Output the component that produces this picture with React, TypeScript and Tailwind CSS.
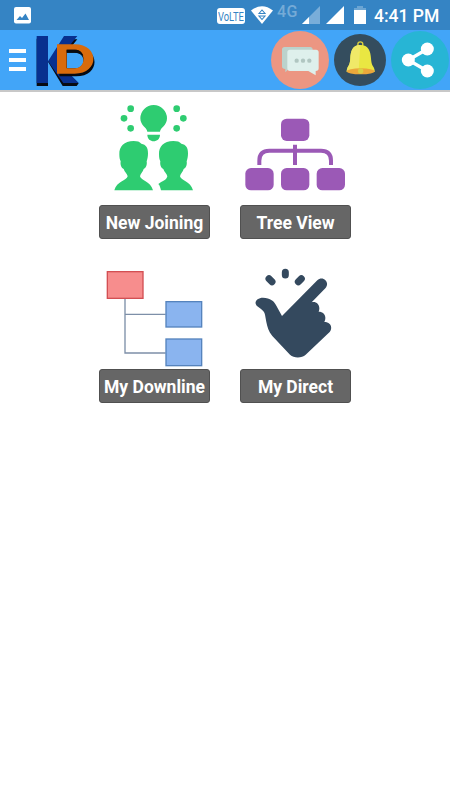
import type { ReactNode } from "react";

const StatusBar = () => {
  return (
    <div className="w-full h-[30px] bg-[#3584c4] flex items-start text-white">
      <svg className="w-[17px] h-[17px] ml-[14px] mt-[7px]" viewBox="0 0 17 17">
        <rect width="17" height="16.5" rx="2" fill="#fff" />
        <path d="M2.5 13 6 9l2 2 3.5-4.500 3.500 6.500z" fill="#3584c4" />
      </svg>
      <div className="ml-[186px] mt-2 w-7 h-4 rounded-[3px] bg-white text-[#3584c4] text-[13px] leading-[17px] flex justify-center">
        <span className="scale-x-[0.72]">VoLTE</span>
      </div>
      <svg className="w-[22px] h-[18px] ml-[6px] mt-[6px]" viewBox="0 0 22 18">
        <path d="M0 4.500Q11-4 22 4.500L11 18z" fill="#fff" />
        <path
          d="M8 7.500 11 4l3 3.500zM8 10h6l-3 3.500z"
          fill="#fff"
          stroke="#3584c4"
          strokeWidth="1.100"
        />
      </svg>
      <span className="ml-1 mt-[3px] w-[25px] text-[16px] leading-[17px] tracking-[0.5px] font-medium text-[#75abd7]">
        4G
      </span>
      <svg className="w-[18px] h-[18px] mt-[6px]" viewBox="0 0 18 18">
        <path d="M0 18 18 0v18z" fill="#79add9" />
        <path d="M0 18 7 11v7z" fill="#fff" />
      </svg>
      <svg className="w-[18px] h-[18px] ml-[6px] mt-[6px]" viewBox="0 0 18 18">
        <path d="M0 18 18 0v18z" fill="#fff" />
      </svg>
      <svg className="w-3 h-[18px] ml-[10px] mt-[6px]" viewBox="0 0 12 18">
        <path d="M3 0h6v2h3v3H0V2h3z" fill="#6ba5d3" />
        <path d="M0 4h12v14H0z" fill="#fff" />
      </svg>
      <span className="ml-2 mt-[5px] text-[17.5px] leading-[22px] font-medium whitespace-nowrap">
        4:41 PM
      </span>
    </div>
  );
};

const Logo = () => {
  return (
    <svg className="w-[59px] h-[52px] ml-[10px] mt-[2px]" viewBox="108 105 177 156">
      <path
        d="M110 116h34v142h-34zM144 185l68-67h20l-58 72 62 60-6 8h-42z"
        fill="#080b12"
      />
      <path d="M110 108h34v141h-34zM144 184l48-76h40l-40 50v46l44 45h-46z" fill="#08308f" />
      <path
        fillRule="evenodd"
        d="M178 141h50c72 0 76 88 0 88h-50zM201 158v47h24c34 0 34-47 0-47z"
        fill="#080b12"
      />
      <path
        fillRule="evenodd"
        d="M171 133h53c75 0 75 88 0 88h-53zM200 149v56h25c34 0 34-56 0-56z"
        fill="#d96b0c"
      />
      <path d="M200 149h25c14 0 22 8 25 18-6-6-14-9-25-9h-25z" fill="#080b12" />
    </svg>
  );
};

const Header = () => {
  return (
    <div className="w-full h-[62px] bg-[#42a5f8] border-b-2 border-[#c8c8c8] flex items-center">
      <div className="ml-[9px] w-[17px] flex flex-col gap-[5px]">
        <div className="h-1 bg-white" />
        <div className="h-1 bg-white" />
        <div className="h-1 bg-white" />
      </div>
      <Logo />
      <svg className="w-[58px] h-[58px] ml-[176px]" viewBox="33 21 174 174">
        <circle cx="120" cy="108" r="87" fill="#ec9682" />
        <path d="M74 69h76q8 0 8 8v50q0 8-8 8H86l-10 10v-10q-10 0-10-8V77q0-8 8-8z" fill="#bbd2cc" />
        <path d="M90 77h78q8 0 8 8v48q0 8-9 8v13l-22-13H90q-8 0-8-8V85q0-8 8-8z" fill="#def0ec" />
        <g fill="#b0c6c1">
          <circle cx="110" cy="110" r="6.500" />
          <circle cx="129" cy="110" r="6.500" />
          <circle cx="148" cy="110" r="6.500" />
        </g>
      </svg>
      <svg className="w-[52px] h-[52px] ml-[5px]" viewBox="222 30 156 156">
        <circle cx="300" cy="108" r="78" fill="#344d5e" />
        <circle cx="301" cy="61" r="7.500" fill="none" stroke="#d9cf3c" strokeWidth="4" />
        <path d="M301 63c-24 0-29 18-30 40-1 16-4 21-8 27-3 6-3 10-3 14h84c0-4 0-8-3-14-4-6-7-11-8-27-1-22-8-40-32-40z" fill="#e9e742" />
        <path d="M301 63c-24 0-29 18-30 40-1 16-4 21-8 27l-3 12h36z" fill="#f0e968" />
        <ellipse cx="302" cy="142" rx="42" ry="9" fill="#eba83b" />
        <circle cx="302" cy="141" r="8" fill="#d9d044" />
      </svg>
      <svg className="w-[58px] h-[58px] ml-[5px] shrink-0" viewBox="393 21 174 174">
        <circle cx="480" cy="108" r="87" fill="#27b5d5" />
        <path d="M502 75 445 108l57 33" fill="none" stroke="#fff" strokeWidth="10" />
        <g fill="#fff">
          <circle cx="502" cy="75" r="19.500" />
          <circle cx="445" cy="108" r="19.500" />
          <circle cx="502" cy="141" r="19.500" />
        </g>
      </svg>
    </div>
  );
};

const JoiningIcon = () => {
  return (
    <svg className="w-[111px] h-[109px]" viewBox="12 0 333 327" fill="#2ecc71">
      <circle cx="107" cy="38" r="10" />
      <circle cx="87" cy="67" r="10" />
      <circle cx="107" cy="97" r="10" />
      <circle cx="245" cy="38" r="10" />
      <circle cx="265" cy="67" r="10" />
      <circle cx="245" cy="97" r="10" />
      <path d="M157 107c-1-12-21-18-21-40a40 40 0 0 1 80 0c0 22-20 28-21 40zM157 116h38c0 26-38 26-38 0z" />
      <path d="M116 135c-29 0-44 17-43 40 0 9 1 15 4 21-2 12 3 21 9 23 2 8 11 14 12 22-3 14-33 14-40 42h116c-7-28-36-28-39-42 1-8 9-14 11-22 6-2 11-11 9-23 3-8 4-16 4-24 0-18-6-26-20-29-5-6-12-8-23-8z" />
      <path d="M235 135c-29 0-44 17-43 40 0 9 1 15 4 21-2 12 3 21 9 23 2 8 11 14 12 22-2 12-16 14-27 23 5 5 6 12 8 19h96c-7-28-36-28-39-42 1-8 9-14 11-22 6-2 11-11 9-23 3-8 4-16 4-24 0-18-6-26-20-29-5-6-12-8-24-8z" />
    </svg>
  );
};

const TreeIcon = () => {
  return (
    <svg className="w-[111px] h-[109px]" viewBox="15 0 333 327" fill="#9b59b6">
      <rect x="138" y="68" width="85" height="67" rx="17" />
      <rect x="31" y="216" width="85" height="67" rx="17" />
      <rect x="138" y="216" width="85" height="67" rx="17" />
      <rect x="245" y="216" width="85" height="67" rx="17" />
      <path
        d="M73 207v-13q0-30 30-30h155q30 0 30 30v13M180 146v61"
        fill="none"
        stroke="#9b59b6"
        strokeWidth="12"
      />
    </svg>
  );
};

const DownlineIcon = () => {
  return (
    <svg className="w-[111px] h-[109px]" viewBox="12 0 333 327">
      <path d="M90 116v163h122M90 163h122" fill="none" stroke="#7d8fa8" strokeWidth="4" />
      <rect x="37" y="35" width="107" height="80" fill="#f78d8d" stroke="#d34f53" strokeWidth="4" />
      <g fill="#8ab4ef" stroke="#5583bd" strokeWidth="4">
        <rect x="213" y="125" width="107" height="76" />
        <rect x="213" y="237" width="107" height="80" />
      </g>
    </svg>
  );
};

const DirectIcon = () => {
  return (
    <svg className="w-[111px] h-[109px]" viewBox="15 0 333 327" fill="#34495e">
      <path
        d="m102 56 9 9M151 37v8M199 56l-9 9"
        fill="none"
        stroke="#34495e"
        strokeWidth="21"
        strokeLinecap="round"
      />
      <path d="M141 168 247 61c16-16 40 6 24 24l-41 42c16-4 28 11 21 28 17 0 25 15 17 31 19 0 26 16 16 30l-72 68c-12 11-35 11-47 0l-53-56c-12-14-15-28-18-42l-4-22c-1-8-6-12-12-17l-12-9c-11-11 0-25 18-25 22 0 34 11 40 24z" />
    </svg>
  );
};

const MenuTile = ({ label, children }: { label: string; children: ReactNode }) => {
  return (
    <div className="w-[111px] flex flex-col">
      {children}
      <div className="w-full h-[34px] rounded-[3px] bg-[#666666] border border-[#505050] text-white text-[17.5px] font-bold flex justify-center items-center whitespace-nowrap pt-[2px]">
        {label}
      </div>
    </div>
  );
};

export default function App() {
  return (
    <div className="w-full h-[100vh] bg-white font-[Roboto,sans-serif] overflow-hidden">
      <StatusBar />
      <Header />
      <div className="pt-1 grid grid-cols-[111px_111px] gap-x-[30px] gap-y-[21px] justify-center">
        <MenuTile label="New Joining">
          <JoiningIcon />
        </MenuTile>
        <MenuTile label="Tree View">
          <TreeIcon />
        </MenuTile>
        <MenuTile label="My Downline">
          <DownlineIcon />
        </MenuTile>
        <MenuTile label="My Direct">
          <DirectIcon />
        </MenuTile>
      </div>
    </div>
  );
}
